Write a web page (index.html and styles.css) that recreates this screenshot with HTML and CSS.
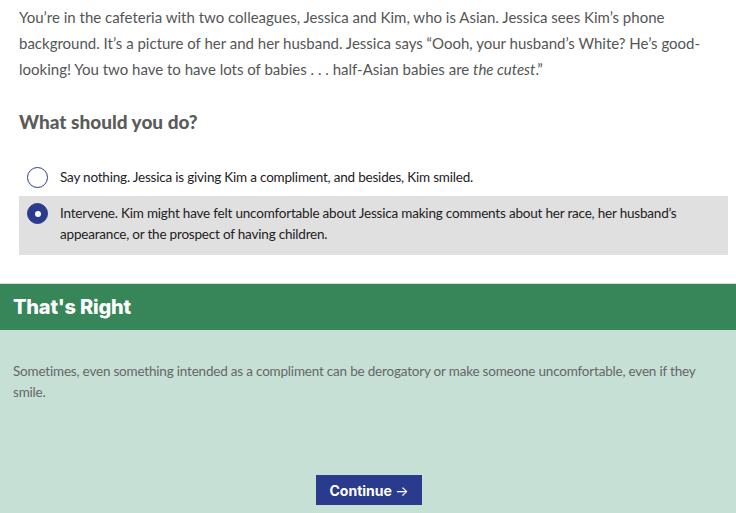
FILE: index.html
```html
<!DOCTYPE html>
<html>
<head>
<meta charset="utf-8">
<link rel="stylesheet" href="styles.css">
</head>
<body>
<main class="question">
  <p class="scenario">You’re in the cafeteria with two colleagues, Jessica and Kim, who is Asian. Jessica sees Kim’s phone background. It’s a picture of her and her husband. Jessica says “Oooh, your husband’s White? He’s good-looking! You two have to have lots of babies . . . half-Asian babies are <em>the cutest</em>.”</p>
  <h2 class="prompt">What should you do?</h2>
  <ul class="options">
    <li class="option">
      <span class="radio"></span>
      <span class="option-text">Say nothing. Jessica is giving Kim a compliment, and besides, Kim smiled.</span>
    </li>
    <li class="option selected">
      <span class="radio checked"></span>
      <span class="option-text">Intervene. Kim might have felt uncomfortable about Jessica making comments about her race, her husband’s appearance, or the prospect of having children.</span>
    </li>
  </ul>
</main>
<section class="feedback">
  <h3 class="feedback-title">That's Right</h3>
  <div class="feedback-body">
    <p>Sometimes, even something intended as a compliment can be derogatory or make someone uncomfortable, even if they smile.</p>
    <div class="actions">
      <button class="continue">Continue <span class="arrow">→</span></button>
    </div>
  </div>
</section>
</body>
</html>
```
FILE: styles.css
```css
html, body {
  margin: 0;
  padding: 0;
  background: #fff;
}
body {
  font-family: "Lato", "Open Sans", sans-serif;
  width: 736px;
  height: 513px;
  overflow: hidden;
  display: flex;
  flex-direction: column;
}
.question {
  padding: 0 8px 0 19px;
}
.scenario {
  margin: 0;
  padding-top: 4px;
  font-size: 15px;
  line-height: 26px;
  color: #555;
  padding-right: 12px;
}
.prompt {
  margin: 27px 0 0;
  font-size: 19px;
  line-height: 26px;
  font-weight: 900;
  color: #5b5b5b;
}
.options {
  list-style: none;
  margin: 24px 0 0;
  padding: 0;
  display: flex;
  flex-direction: column;
  gap: 0;
}
.option {
  display: flex;
  align-items: flex-start;
  gap: 12px;
  padding: 8px 10px 8px 8px;
  font-size: 13.5px;
  letter-spacing: -0.2px;
  line-height: 21px;
  color: #222;
}
.option.selected {
  background: #e0e0e0;
  padding: 7px 10px 10px 8px;
}
.radio {
  flex: none;
  box-sizing: border-box;
  width: 21px;
  height: 21px;
  border-radius: 50%;
  border: 1.5px solid #2a3a8c;
  background: #fff;
  display: flex;
  align-items: center;
  justify-content: center;
}
.radio.checked {
  background: #2a3a8c;
}
.radio.checked::after {
  content: "";
  width: 6px;
  height: 6px;
  border-radius: 50%;
  background: #fff;
}
.feedback {
  margin-top: 28px;
  border-top: 1px solid #d8d8d8;
  flex: 1;
  display: flex;
  flex-direction: column;
  min-height: 0;
}
.feedback-title {
  margin: 0;
  flex: none;
  height: 46px;
  display: flex;
  align-items: center;
  padding: 0 13px;
  background: #37865a;
  color: #fff;
  font-family: "Inter", "Roboto", sans-serif;
  font-weight: 800;
  font-size: 20px;
  letter-spacing: -0.2px;
}
.feedback-body {
  flex: 1;
  background: #c6e0d6;
  padding: 31px 13px 0;
}
.feedback-body p {
  margin: 0;
  font-size: 13.5px;
  letter-spacing: -0.2px;
  line-height: 21px;
  color: #666;
  padding-right: 24px;
}
.actions {
  display: flex;
  justify-content: center;
  margin-top: 72px;
}
.continue {
  border: none;
  background: #2a3a8c;
  color: #fff;
  font-family: "Inter", "Roboto", sans-serif;
  font-weight: 700;
  font-size: 14px;
  height: 30px;
  width: 106px;
  padding: 0;
  margin-left: 2px;
  cursor: pointer;
}
.continue .arrow {
  font-weight: 400;
}
```
